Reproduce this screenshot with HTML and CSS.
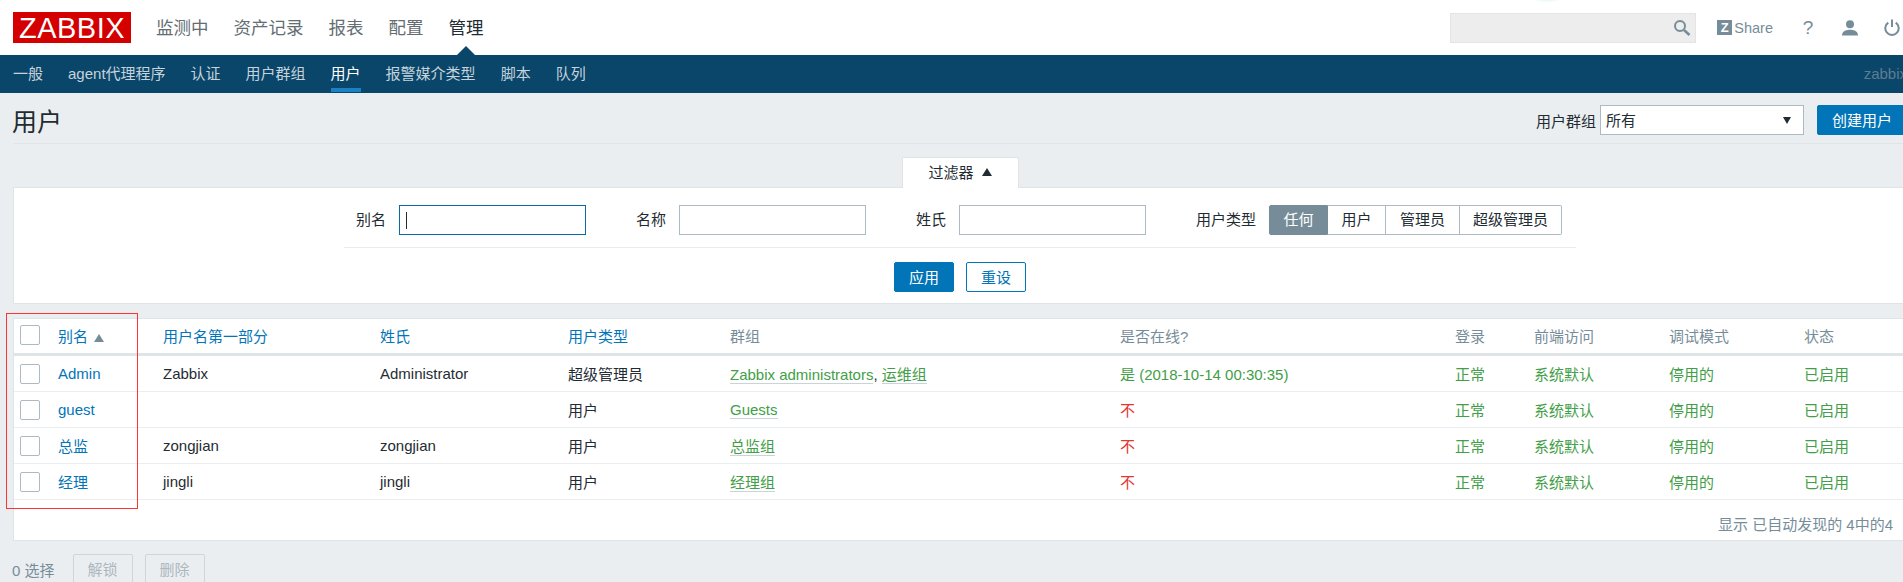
FILE: index.html
```html
<!DOCTYPE html>
<html lang="zh-CN">
<head>
  <meta charset="UTF-8">
  <title>用户 - Zabbix</title>
  <link rel="stylesheet" href="styles.css">
</head>
<body>
<div class="page">
  <header class="top">
    <div class="glow"></div>
    <a class="logo">ZABBIX</a>
    <nav class="top-nav">
      <a>监测中</a>
      <a>资产记录</a>
      <a>报表</a>
      <a>配置</a>
      <a class="active">管理</a>
    </nav>
    <div class="search">
      <svg width="18" height="18" viewBox="0 0 18 18"><circle cx="7" cy="7" r="5" fill="none" stroke="#768d99" stroke-width="2"/><path d="M11 11l5.5 5" stroke="#768d99" stroke-width="2.6"/></svg>
    </div>
    <a class="share"><span class="share-z">Z</span>Share</a>
    <a class="top-icon help">?</a>
    <a class="top-icon">
      <svg width="16" height="16" viewBox="0 0 16 16"><circle cx="8" cy="4.2" r="4" fill="#768d99"/><path d="M0 15.5c0-3.6 3-5.7 8-5.7s8 2.100 8 5.700z" fill="#768d99"/></svg>
    </a>
    <a class="top-icon">
      <svg width="16" height="17" viewBox="0 0 16 17"><path d="M4.300 3.600a6.700 6.700 0 1 0 7.400 0M8 0.500v7.500" fill="none" stroke="#768d99" stroke-width="2"/></svg>
    </a>
  </header>

  <nav class="sub-nav">
    <a>一般</a>
    <a>agent代理程序</a>
    <a>认证</a>
    <a>用户群组</a>
    <a class="active">用户</a>
    <a>报警媒介类型</a>
    <a>脚本</a>
    <a>队列</a>
    <span class="server">zabbix</span>
  </nav>

  <main class="content">
    <div class="title-row">
      <h1>用户</h1>
      <div class="title-controls">
        <label>用户群组</label>
        <div class="select">所有<span class="select-arrow"></span></div>
        <button class="btn btn-create">创建用户</button>
      </div>
    </div>

    <div class="filter-tabs">
      <a class="filter-tab">过滤器<span class="tab-arrow"></span></a>
    </div>
    <section class="filter">
      <div class="filter-fields">
        <label>别名</label>
        <div class="input-wrap">
          <input type="text" class="focused">
          <span class="caret"></span>
        </div>
        <label class="next">名称</label>
        <input type="text">
        <label class="next">姓氏</label>
        <input type="text">
        <label class="next">用户类型</label>
        <div class="segments">
          <a class="seg-any on">任何</a>
          <a class="seg-user">用户</a>
          <a class="seg-admin">管理员</a>
          <a class="seg-super">超级管理员</a>
        </div>
      </div>
      <div class="filter-buttons">
        <button class="btn btn-apply">应用</button>
        <button class="btn btn-reset">重设</button>
      </div>
    </section>

    <section class="list">
      <div class="red-box"></div>
      <table>
        <colgroup>
          <col class="c-check"><col class="c-alias"><col class="c-name"><col class="c-surname"><col class="c-type">
          <col class="c-groups"><col class="c-online"><col class="c-login"><col class="c-front"><col class="c-debug"><col class="c-status">
        </colgroup>
        <thead>
          <tr>
            <th><input type="checkbox"></th>
            <th><a>别名</a><span class="sort-arrow"></span></th>
            <th><a>用户名第一部分</a></th>
            <th><a>姓氏</a></th>
            <th><a>用户类型</a></th>
            <th>群组</th>
            <th>是否在线?</th>
            <th>登录</th>
            <th>前端访问</th>
            <th>调试模式</th>
            <th>状态</th>
          </tr>
        </thead>
        <tbody>
          <tr>
            <td><input type="checkbox"></td>
            <td><a>Admin</a></td>
            <td>Zabbix</td>
            <td>Administrator</td>
            <td>超级管理员</td>
            <td><a class="group">Zabbix administrators</a>, <a class="group">运维组</a></td>
            <td class="green">是 (2018-10-14 00:30:35)</td>
            <td class="green">正常</td>
            <td class="green">系统默认</td>
            <td class="green">停用的</td>
            <td class="green">已启用</td>
          </tr>
          <tr>
            <td><input type="checkbox"></td>
            <td><a>guest</a></td>
            <td></td>
            <td></td>
            <td>用户</td>
            <td><a class="group">Guests</a></td>
            <td class="red">不</td>
            <td class="green">正常</td>
            <td class="green">系统默认</td>
            <td class="green">停用的</td>
            <td class="green">已启用</td>
          </tr>
          <tr>
            <td><input type="checkbox"></td>
            <td><a>总监</a></td>
            <td>zongjian</td>
            <td>zongjian</td>
            <td>用户</td>
            <td><a class="group">总监组</a></td>
            <td class="red">不</td>
            <td class="green">正常</td>
            <td class="green">系统默认</td>
            <td class="green">停用的</td>
            <td class="green">已启用</td>
          </tr>
          <tr>
            <td><input type="checkbox"></td>
            <td><a>经理</a></td>
            <td>jingli</td>
            <td>jingli</td>
            <td>用户</td>
            <td><a class="group">经理组</a></td>
            <td class="red">不</td>
            <td class="green">正常</td>
            <td class="green">系统默认</td>
            <td class="green">停用的</td>
            <td class="green">已启用</td>
          </tr>
        </tbody>
      </table>
      <div class="list-footer">显示 已自动发现的 4中的4</div>
    </section>

    <div class="actions">
      <span class="selected">0 选择</span>
      <button class="btn btn-off">解锁</button>
      <button class="btn btn-off">删除</button>
    </div>
  </main>
</div>
</body>
</html>
```

FILE: styles.css
```css
* {
  box-sizing: border-box;
}
html, body {
  margin: 0;
  height: 100%;
  overflow: hidden;
}
body {
  font-family: "Liberation Sans", "Noto Sans CJK SC", sans-serif;
  font-size: 15px;
  color: #1f2c33;
  background-color: #ebeef0;
}
.page {
  width: 1920px;
}

/* top bar */
.top {
  position: relative;
  display: flex;
  align-items: center;
  height: 55px;
  padding: 0 7px 0 13px;
  background-color: #fff;
}
.glow {
  position: absolute;
  left: 1528px;
  top: -17px;
  width: 38px;
  height: 20px;
  border-radius: 50%;
  background: radial-gradient(closest-side, #b5e3e6, #fff);
}
.logo {
  width: 118px;
  height: 31px;
  background-color: #d40000;
  color: #fff;
  font-size: 29px;
  line-height: 32px;
  text-align: center;
  letter-spacing: 0.5px;
}
.top-nav {
  display: flex;
  gap: 25px;
  margin-left: 25px;
  margin-top: -3px;
}
.top-nav a {
  position: relative;
  font-size: 17.5px;
  color: #646d72;
}
.top-nav a.active {
  color: #1f2c33;
}
.top-nav a.active::after {
  content: "";
  position: absolute;
  left: 50%;
  bottom: -17px;
  margin-left: -10px;
  border: solid transparent;
  border-width: 0 10px 10px;
  border-bottom-color: #0a466a;
}
.search {
  display: flex;
  align-items: center;
  justify-content: flex-end;
  width: 246px;
  height: 30px;
  margin-left: auto;
  padding-right: 4px;
  background-color: #ededed;
  border: 1px solid #e4e4e4;
}
.share {
  display: flex;
  align-items: center;
  margin-left: 21px;
  font-size: 14.5px;
  color: #768d99;
}
.share-z {
  width: 15px;
  height: 15px;
  margin-right: 2px;
  background-color: #768d99;
  color: #fff;
  font-size: 13px;
  font-weight: bold;
  line-height: 15px;
  text-align: center;
}
.top-icon {
  display: flex;
  justify-content: center;
  width: 42px;
  color: #768d99;
}
.help {
  margin-left: 14px;
  font-size: 19px;
}

/* second level menu */
.sub-nav {
  display: flex;
  gap: 25px;
  height: 38px;
  padding: 0 13px;
  background-color: #0a466a;
}
.sub-nav a {
  height: 37px;
  line-height: 38px;
  color: #c6d3db;
  border-bottom: 4px solid transparent;
}
.sub-nav a.active {
  color: #fff;
  border-bottom-color: #1a82c2;
}
.server {
  margin-left: auto;
  line-height: 38px;
  color: #5f7d91;
}

.content {
  padding: 0 13px;
}

/* title */
.title-row {
  display: flex;
  align-items: center;
  justify-content: space-between;
  height: 51px;
  padding-top: 4px;
  border-bottom: 1px solid #dfe4e7;
}
h1 {
  margin: 0 0 0 -1px;
  font-size: 25px;
  font-weight: normal;
}
.title-controls {
  display: flex;
  align-items: center;
}
.select {
  position: relative;
  width: 204px;
  height: 30px;
  margin-left: 4px;
  padding-left: 5px;
  line-height: 30px;
  background-color: #fff;
  border: 1px solid #acbbc2;
}
.select-arrow {
  position: absolute;
  right: 12px;
  top: 11px;
  border: solid transparent;
  border-width: 7px 4px 0;
  border-top-color: #1f2c33;
}
.btn {
  height: 30px;
  padding: 0 14px 2px;
  font: inherit;
  border: 1px solid #0275b8;
  border-radius: 2px;
  background-color: #0275b8;
  color: #fff;
}
.btn-create {
  margin-left: 13px;
}
.btn-reset {
  background-color: #fff;
  color: #0275b8;
}
.btn-off {
  background-color: #ebeef0;
  border-color: #cfd6da;
  color: #acb8be;
}

/* filter */
.filter-tabs {
  display: flex;
  justify-content: center;
  margin-top: 13px;
}
.filter-tab {
  position: relative;
  display: flex;
  align-items: center;
  justify-content: center;
  width: 117px;
  height: 31px;
  margin-bottom: -1px;
  padding-bottom: 3px;
  background-color: #fff;
  border: 1px solid #dfe4e7;
  border-bottom: none;
  border-radius: 2px 2px 0 0;
}
.tab-arrow {
  margin-left: 8px;
  border: solid transparent;
  border-width: 0 5px 8px;
  border-bottom-color: #1f2c33;
}
.filter {
  height: 117px;
  padding-top: 17px;
  background-color: #fff;
  border: 1px solid #dfe4e7;
}
.filter-fields {
  display: flex;
  align-items: center;
  width: 1232px;
  height: 43px;
  margin: 0 auto;
  padding: 0 13px 12px 12px;
  border-bottom: 1px solid #ebebeb;
}
.filter-fields label {
  margin-right: 13px;
  margin-bottom: 3px;
}
.filter-fields label.next {
  margin-left: 50px;
}
input[type="text"] {
  display: block;
  width: 187px;
  height: 30px;
  border: 1px solid #acbbc2;
  background-color: #fff;
}
input.focused {
  border-color: #0b6aa5;
}
.input-wrap {
  position: relative;
}
.caret {
  position: absolute;
  left: 7px;
  top: 7px;
  width: 1px;
  height: 17px;
  background-color: #1f2c33;
}
.segments {
  display: flex;
  height: 30px;
}
.segments a {
  line-height: 27px;
  text-align: center;
  background-color: #fff;
  border: 1px solid #acbbc2;
  border-left: none;
}
.segments a:first-child {
  border-radius: 2px 0 0 2px;
  border-left: 1px solid #768d99;
}
.segments a:last-child {
  border-radius: 0 2px 2px 0;
}
.segments a.on {
  background-color: #768d99;
  border-color: #768d99;
  color: #fff;
}
.seg-any { width: 59px; }
.seg-user { width: 58px; }
.seg-admin { width: 74px; }
.seg-super { width: 102px; }
.filter-buttons {
  display: flex;
  justify-content: center;
  gap: 12px;
  margin-top: 14px;
}
.filter-buttons .btn {
  width: 60px;
  padding: 0 0 2px;
}

/* user list */
.list {
  position: relative;
  margin-top: 14px;
  height: 223px;
  background-color: #fff;
  border: 1px solid #dfe4e7;
}
.red-box {
  position: absolute;
  left: -8px;
  top: -6px;
  width: 132px;
  height: 196px;
  border: 1px solid #f33;
  pointer-events: none;
}
table {
  width: 1892px;
  table-layout: fixed;
  border-collapse: separate;
  border-spacing: 0;
}
.c-check { width: 37px; }
.c-alias { width: 105px; }
.c-name { width: 217px; }
.c-surname { width: 188px; }
.c-type { width: 162px; }
.c-groups { width: 390px; }
.c-online { width: 335px; }
.c-login { width: 79px; }
.c-front { width: 135px; }
.c-debug { width: 135px; }
.c-status { width: 109px; }
th, td {
  height: 36px;
  padding: 0 7px;
  text-align: left;
  font-weight: normal;
  white-space: nowrap;
  border-bottom: 1px solid #ebeef0;
}
th:first-child, td:first-child {
  padding-left: 6px;
}
th {
  height: 37px;
  padding-bottom: 2px;
  color: #768d99;
  border-bottom: 3px solid #dfe4e7;
}
th a, td a {
  color: #0275b8;
}
input[type="checkbox"] {
  display: block;
  appearance: none;
  width: 20px;
  height: 20px;
  margin: 0;
  background-color: #fff;
  border: 1px solid #acbbc2;
  border-radius: 2px;
}
.sort-arrow {
  display: inline-block;
  margin-left: 6px;
  border: solid transparent;
  border-width: 0 5px 8px;
  border-bottom-color: #768d99;
}
td a.group {
  color: #429e47;
  border-bottom: 1px solid #c9d3d9;
}
.green {
  color: #429e47;
}
.red {
  color: #e33734;
}
.list-footer {
  padding-top: 13px;
  padding-right: 13px;
  text-align: right;
  color: #768d99;
}

/* bottom actions */
.actions {
  display: flex;
  align-items: center;
  margin-top: 13px;
  margin-left: -1px;
}
.selected {
  margin-right: 18px;
  color: #768d99;
}
.btn-off {
  margin-right: 12px;
}
```
